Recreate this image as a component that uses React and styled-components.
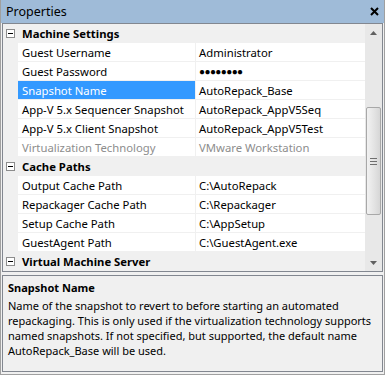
import React from "react"
import styled, { createGlobalStyle } from "styled-components"

const GlobalStyle = createGlobalStyle`
  html, body {
    margin: 0;
    padding: 0;
    background: #ffffff;
  }
  body {
    font-family: "Noto Sans", "Liberation Sans", sans-serif;
    font-size: 11.3px;
    color: #000000;
  }
`

const sections = [
  {
    name: "Machine Settings",
    items: [
      { name: "Guest Username", value: "Administrator" },
      { name: "Guest Password", value: "●●●●●●●●", password: true },
      { name: "Snapshot Name", value: "AutoRepack_Base", selected: true },
      { name: "App-V 5.x Sequencer Snapshot", value: "AutoRepack_AppV5Seq" },
      { name: "App-V 5.x Client Snapshot", value: "AutoRepack_AppV5Test" },
      { name: "Virtualization Technology", value: "VMware Workstation", disabled: true },
    ],
  },
  {
    name: "Cache Paths",
    items: [
      { name: "Output Cache Path", value: "C:\\AutoRepack" },
      { name: "Repackager Cache Path", value: "C:\\Repackager" },
      { name: "Setup Cache Path", value: "C:\\AppSetup" },
      { name: "GuestAgent Path", value: "C:\\GuestAgent.exe" },
    ],
  },
  { name: "Virtual Machine Server", items: [] },
]

const App = () => {
  return (
    <>
      <GlobalStyle />
      <Window>
        <TitleBar>
          <span>Properties</span>
          <CloseIcon width="9" height="9" viewBox="0 0 9 9">
            <path d="M1 1 L8 8 M8 1 L1 8" stroke="#000" strokeWidth="2" />
          </CloseIcon>
        </TitleBar>

        <Grid>
          <Rows>
            {sections.map((section) => (
              <React.Fragment key={section.name}>
                <CategoryRow>
                  <Expander>
                    <svg width="9" height="9" viewBox="0 0 9 9">
                      <rect x="0.5" y="0.5" width="8" height="8" fill="#fff" stroke="#8c8c8c" />
                      <path d="M2 4.5 H7" stroke="#000" />
                    </svg>
                  </Expander>
                  <CategoryLabel>{section.name}</CategoryLabel>
                </CategoryRow>
                {section.items.map((item) => (
                  <PropertyRow key={item.name}>
                    <Gutter />
                    <NameCell $selected={item.selected} $disabled={item.disabled}>
                      {item.name}
                    </NameCell>
                    <ValueCell $disabled={item.disabled} $password={item.password}>
                      {item.value}
                    </ValueCell>
                  </PropertyRow>
                ))}
              </React.Fragment>
            ))}
          </Rows>

          <ScrollBar>
            <ArrowButton>
              <svg width="7" height="4" viewBox="0 0 7 4">
                <path d="M0 4 L3.5 0 L7 4 Z" fill="#606060" />
              </svg>
            </ArrowButton>
            <Track>
              <Thumb>
                <Grip />
                <Grip />
                <Grip />
              </Thumb>
            </Track>
            <ArrowButton>
              <svg width="7" height="4" viewBox="0 0 7 4">
                <path d="M0 0 L7 0 L3.5 4 Z" fill="#606060" />
              </svg>
            </ArrowButton>
          </ScrollBar>
        </Grid>

        <Description>
          <DescTitle>Snapshot Name</DescTitle>
          <DescText>
            Name of the snapshot to revert to before starting an automated repackaging. This is
            only used if the virtualization technology supports named snapshots. If not specified,
            but supported, the default name AutoRepack_Base will be used.
          </DescText>
        </Description>
      </Window>
    </>
  )
}

export default App

const Window = styled.div`
  display: flex;
  flex-direction: column;
  box-sizing: border-box;
  width: 385px;
  height: 375px;
  padding: 0 1px 2px 1px;
  background: #f0f0f0;
  border-left: 1px solid #a0a0a0;
  border-right: 1px solid #a0a0a0;
  border-bottom: 1px solid #a0a0a0;
`

const TitleBar = styled.div`
  display: flex;
  align-items: center;
  justify-content: space-between;
  height: 23px;
  margin: 0 -1px;
  padding: 0 5px 0 5px;
  background: #9fbbd8;
  font-size: 12.5px;
`

const CloseIcon = styled.svg`
  display: block;
`

const Grid = styled.div`
  display: flex;
  height: 247px;
  border: 1px solid #828790;
  background: #ffffff;
  overflow: hidden;
`

const Rows = styled.div`
  flex: 1;
  display: flex;
  flex-direction: column;
  overflow: hidden;
`

const CategoryRow = styled.div`
  display: flex;
  align-items: center;
  flex: 0 0 19px;
  background: #f0f0f0;
`

const Expander = styled.div`
  display: flex;
  justify-content: center;
  width: 15px;
`

const CategoryLabel = styled.span`
  padding-left: 4px;
  font-weight: bold;
`

const PropertyRow = styled.div`
  display: grid;
  grid-template-columns: 15px 178px 1fr;
  flex: 0 0 19px;
`

const Gutter = styled.div`
  background: #f0f0f0;
`

const NameCell = styled.div`
  display: flex;
  align-items: center;
  padding-left: 4px;
  border-bottom: 1px solid #f0f0f0;
  border-right: 1px solid #f0f0f0;
  background: ${(p) => (p.$selected ? "#3399ff" : "#ffffff")};
  color: ${(p) => (p.$selected ? "#ffffff" : p.$disabled ? "#8d8d8d" : "#000000")};
  white-space: nowrap;
  overflow: hidden;
`

const ValueCell = styled.div`
  display: flex;
  align-items: center;
  padding-left: 3px;
  border-bottom: 1px solid #f0f0f0;
  color: ${(p) => (p.$disabled ? "#8d8d8d" : "#000000")};
  font-size: ${(p) => (p.$password ? "10px" : "inherit")};
  letter-spacing: ${(p) => (p.$password ? "-0.6px" : "0")};
  white-space: nowrap;
`

const ScrollBar = styled.div`
  display: flex;
  flex-direction: column;
  width: 17px;
  background: #e8e8e8;
`

const ArrowButton = styled.div`
  display: flex;
  align-items: center;
  justify-content: center;
  height: 17px;
`

const Track = styled.div`
  flex: 1;
  display: flex;
  flex-direction: column;
`

const Thumb = styled.div`
  display: flex;
  flex-direction: column;
  align-items: center;
  justify-content: center;
  gap: 2px;
  box-sizing: border-box;
  height: 108px;
  margin: 66px 1px 0 1px;
  border: 1px solid #a8a8a8;
  border-radius: 2px;
  background: linear-gradient(to right, #f2f2f2, #e2e2e2 60%, #d6d6d6);
`

const Grip = styled.div`
  width: 7px;
  height: 1px;
  background: #6f6f6f;
`

const Description = styled.div`
  flex: 1;
  margin-top: 3px;
  padding: 4px 1px 4px 5px;
  border: 1px solid #828790;
  background: #f0f0f0;
  font-size: 11px;
`

const DescTitle = styled.div`
  font-weight: bold;
  line-height: 16px;
`

const DescText = styled.div`
  margin-top: 2px;
  line-height: 15px;
`
